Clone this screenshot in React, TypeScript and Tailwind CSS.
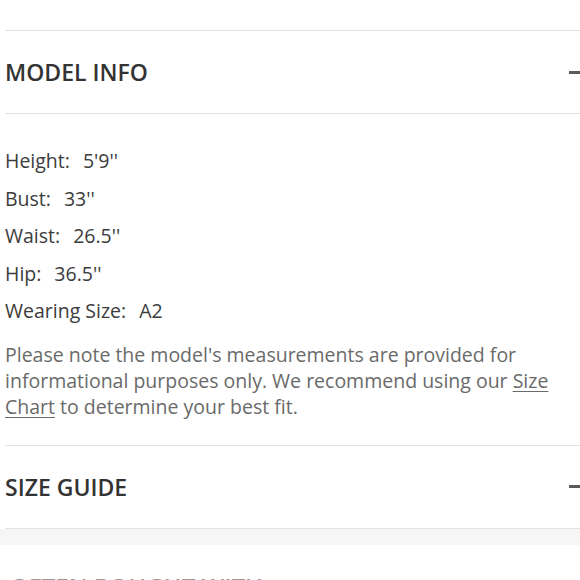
import React from "react";

const measurements = [
  { label: "Height:", value: "5'9''" },
  { label: "Bust:", value: "33''" },
  { label: "Waist:", value: "26.5''" },
  { label: "Hip:", value: "36.5''" },
  { label: "Wearing Size:", value: "A2" },
];

function SectionHeader({ title }: { title: string }) {
  return (
    <div className="flex h-[82px] items-center justify-between">
      <h2 className="text-[23px] font-semibold leading-[32px] text-[#333]">{title}</h2>
      <span className="block h-[3px] w-[14px] bg-[#5a5a5a]" />
    </div>
  );
}

export default function App() {
  return (
    <div
      className="h-[580px] w-[580px] overflow-hidden bg-white"
      style={{ fontFamily: '"Open Sans", "Liberation Sans", sans-serif' }}
    >
      <div className="h-[30px]" />

      <div className="ml-[5px] w-[578px]">
        {/* Model info */}
        <div className="border-t border-[#e2e2e2]">
          <SectionHeader title="MODEL INFO" />
        </div>
        <div className="border-t border-[#e2e2e2] pt-[28px] pb-[25px]">
          <ul className="text-[19.5px] leading-[37.5px] text-[#3c3c3c]">
            {measurements.map((m) => (
              <li key={m.label}>
                {m.label}
                <span className="ml-[13px]">{m.value}</span>
              </li>
            ))}
          </ul>
          <p className="mt-[12px] w-[565px] text-[19.5px] leading-[26px] text-[#6a6a6a]">
            Please note the model's measurements are provided for informational purposes only. We
            recommend using our <a className="underline underline-offset-[3px]">Size Chart</a> to
            determine your best fit.
          </p>
        </div>

        {/* Size guide */}
        <div className="border-t border-[#e2e2e2]">
          <SectionHeader title="SIZE GUIDE" />
        </div>
        <div className="border-t border-[#e2e2e2]" />
      </div>

      <div className="h-[16px] bg-[#f6f6f6]" />

      <div className="pl-[10px] pt-[26px]">
        <h2 className="text-[24px] font-semibold leading-[32px] text-[#999]">OFTEN BOUGHT WITH</h2>
      </div>
    </div>
  );
}
